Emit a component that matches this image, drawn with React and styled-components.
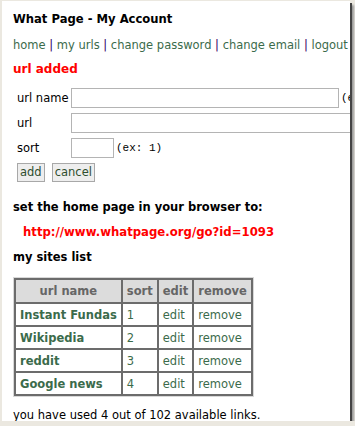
import React from "react";
import styled, { createGlobalStyle } from "styled-components";

const Global = createGlobalStyle`
  html, body { margin: 0; padding: 0; }
  body {
    background: #ebe8e0;
    font-family: "DejaVu Sans", Verdana, sans-serif;
    color: #000;
  }
`;

const Frame = styled.div`
  margin: 1px 0 0 2px;
  width: 348px;
  height: 420px;
  background: #fff;
  overflow: hidden;
  box-shadow: 2px 2px 0 #444, 4px 4px 2px #999;
`;

const Page = styled.div`
  width: 460px;
  padding: 10px 0 0 11px;
  display: flex;
  flex-direction: column;
  align-items: flex-start;
`;

const Title = styled.h1`
  margin: 0;
  font-size: 11.6px;
  font-weight: bold;
  line-height: 16px;
`;

const Nav = styled.div`
  margin-top: 10px;
  font-size: 11.5px;
  line-height: 16px;
  color: #330066;
  white-space: pre;
`;

const NavLink = styled.a`
  color: #3b6b4b;
  text-decoration: none;
`;

const RedText = styled.div`
  margin-top: ${(p) => p.$mt}px;
  margin-left: ${(p) => p.$ml || 0}px;
  font-size: ${(p) => p.$size || 12}px;
  font-weight: bold;
  line-height: 16px;
  color: #ff0000;
  white-space: nowrap;
`;

const Heading = styled.div`
  margin-top: ${(p) => p.$mt}px;
  font-size: 11.5px;
  font-weight: bold;
  line-height: 16px;
  white-space: nowrap;
`;

const Form = styled.div`
  margin-top: 11px;
  margin-left: 4px;
  display: grid;
  grid-template-columns: 54px auto;
  row-gap: 5px;
  align-items: center;
`;

const Label = styled.span`
  font-size: 11.5px;
  line-height: 20px;
  white-space: nowrap;
`;

const FieldRow = styled.div`
  display: flex;
  align-items: center;
  gap: 2px;
`;

const Input = styled.input`
  box-sizing: border-box;
  width: ${(p) => p.$w}px;
  height: 20px;
  border: 1px solid #b4b4b4;
  padding: 0 2px;
  margin: 0;
  background: #fff;
`;

const Hint = styled.span`
  font-family: "Liberation Mono", "DejaVu Sans Mono", monospace;
  font-size: 11px;
  white-space: nowrap;
`;

const Buttons = styled.div`
  margin-top: 5px;
  margin-left: 4px;
  display: flex;
  gap: 7px;
`;

const Button = styled.button`
  box-sizing: border-box;
  height: 19px;
  padding: 0 2px;
  border: 1px solid #a8a8a8;
  background: #eeeeee;
  color: #2e4f2e;
  font-family: "DejaVu Sans", Verdana, sans-serif;
  font-size: 11.5px;
  line-height: 17px;
`;

const Table = styled.table`
  margin-top: 13px;
  margin-left: 1px;
  border-collapse: collapse;
  border: 2px solid #6c6c6c;
  outline: 1px solid #d8d8d8;
  font-size: 11.5px;
`;

const Row = styled.tr`
  height: ${(p) => p.$h}px;
`;

const Th = styled.th`
  background: #dcdcdc;
  color: #666;
  font-weight: bold;
  padding: 0 4px;
  border: 2px solid #6c6c6c;
  text-align: center;
  line-height: 14px;
`;

const Td = styled.td`
  padding: 0 4px;
  border: 2px solid #6c6c6c;
  color: #3b6b4b;
  font-weight: ${(p) => (p.$bold ? "bold" : "normal")};
  white-space: nowrap;
  line-height: 14px;
  width: ${(p) => (p.$w ? p.$w + "px" : "auto")};
`;

const Footer = styled.div`
  margin-top: 11px;
  font-size: 11.5px;
  line-height: 16px;
  white-space: nowrap;
`;

const sites = [
  ["Instant Fundas", 1],
  ["Wikipedia", 2],
  ["reddit", 3],
  ["Google news", 4],
];

const navItems = ["home", "my urls", "change password", "change email", "logout"];

export default function App() {
  return (
    <>
      <Global />
      <Frame>
        <Page>
          <Title>What Page - My Account</Title>
          <Nav>
            {navItems.map((n, i) => (
              <React.Fragment key={n}>
                {i > 0 && " | "}
                <NavLink href="#">{n}</NavLink>
              </React.Fragment>
            ))}
          </Nav>
          <RedText $mt={8}>url added</RedText>
          <Form>
            <Label>url name</Label>
            <FieldRow>
              <Input $w={268} />
              <Hint>(ex: Google)</Hint>
            </FieldRow>
            <Label>url</Label>
            <FieldRow>
              <Input $w={340} />
            </FieldRow>
            <Label>sort</Label>
            <FieldRow>
              <Input $w={43} />
              <Hint>(ex: 1)</Hint>
            </FieldRow>
          </Form>
          <Buttons>
            <Button>add</Button>
            <Button>cancel</Button>
          </Buttons>
          <Heading $mt={17}>set the home page in your browser to:</Heading>
          <RedText $mt={9} $ml={10} $size={11.7}>http://www.whatpage.org/go?id=1093</RedText>
          <Heading $mt={9}>my sites list</Heading>
          <Table>
            <thead>
              <Row $h={24}>
                <Th>url name</Th>
                <Th>sort</Th>
                <Th>edit</Th>
                <Th>remove</Th>
              </Row>
            </thead>
            <tbody>
              {sites.map(([name, sort]) => (
                <Row $h={23} key={name}>
                  <Td $bold>{name}</Td>
                  <Td $w={26}>{sort}</Td>
                  <Td>edit</Td>
                  <Td>remove</Td>
                </Row>
              ))}
            </tbody>
          </Table>
          <Footer>you have used 4 out of 102 available links.</Footer>
        </Page>
      </Frame>
    </>
  );
}
